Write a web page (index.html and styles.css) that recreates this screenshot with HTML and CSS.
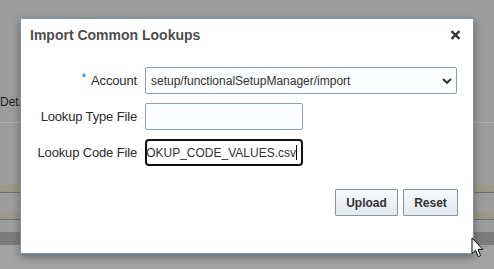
FILE: index.html
```html
<!DOCTYPE html>
<html>
<head>
<meta charset="utf-8">
<link rel="stylesheet" href="styles.css">
</head>
<body>
<div class="page">
  <div class="bg bg-top"></div>
  <div class="bg bg-text">Details</div>
  <div class="bg bg-gap1"></div>
  <div class="bg bg-line"></div>
  <div class="bg bg-gap2"></div>
  <div class="bg bg-band"></div>
  <div class="bg bg-gap3"></div>
  <div class="bg bg-band"></div>
  <div class="bg bg-gap4"></div>
  <div class="bg bg-dark"></div>
  <div class="bg bg-bottom"></div>
</div>

<div class="dialog">
  <div class="dlg-head">
    <span class="dlg-title">Import Common Lookups</span>
    <span class="dlg-close">
      <svg width="11" height="10" viewBox="0 0 11 10"><path d="M1.5 1.2 L9.5 8.8 M9.5 1.2 L1.5 8.8" stroke="#333" stroke-width="2.3" fill="none"/></svg>
    </span>
  </div>
  <div class="dlg-form">
    <label class="lbl"><span class="req">*</span><span>Account</span></label>
    <div class="select">
      <span class="select-text">setup/functionalSetupManager/import</span>
      <svg class="chev" width="10" height="6" viewBox="0 0 10 6"><path d="M1 1 L5 4.8 L9 1" stroke="#333" stroke-width="2" fill="none"/></svg>
    </div>
    <label class="lbl">Lookup Type File</label>
    <div class="field"><div class="input"></div></div>
    <label class="lbl">Lookup Code File</label>
    <div class="field"><div class="input focused"><span class="val">LOOKUP_CODE_VALUES.csv</span><span class="caret"></span></div></div>
  </div>
  <div class="dlg-actions">
    <button class="btn btn-upload">Upload</button>
    <button class="btn btn-reset">Reset</button>
  </div>
</div>

<svg class="cursor" width="14" height="22" viewBox="0 0 14 22">
  <path d="M1 1 L1 16.5 L4.6 13.2 L7.2 19.6 L9.6 18.6 L7 12.3 L11.8 12.3 Z" fill="#fff" stroke="#000" stroke-width="1" stroke-linejoin="miter"/>
</svg>
</body>
</html>
```

FILE: styles.css
```css
html, body {
  margin: 0;
  padding: 0;
}
body {
  width: 494px;
  height: 269px;
  overflow: hidden;
  position: relative;
  font-family: "Liberation Sans", Arial, sans-serif;
  background: #9c9c9c;
}
.page {
  display: flex;
  flex-direction: column;
  width: 494px;
  height: 269px;
}
.bg { flex: none; background: #9c9c9c; }
.bg-top { height: 94px; }
.bg-text {
  height: 16px;
  font-size: 12px;
  line-height: 16px;
  color: #1c1c1c;
  white-space: nowrap;
}
.bg-gap1 { height: 12px; }
.bg-line { height: 1px; background: #adadad; }
.bg-gap2 { height: 62px; }
.bg-band {
  height: 7px;
  background: #9a9886;
  border-bottom: 1px solid #6c7176;
}
.bg-gap3 { height: 19px; }
.bg-gap4 { height: 12px; }
.bg-dark { height: 13px; background: #7c7c7c; }
.bg-bottom { flex: 1; background: #a2a2a2; }

.dialog {
  position: absolute;
  left: 20px;
  top: 18px;
  width: 454px;
  height: 236px;
  box-sizing: border-box;
  background: #fff;
  border: 1px solid #7d94aa;
  box-shadow: 0 3px 8px rgba(0, 0, 0, 0.35);
  display: flex;
  flex-direction: column;
}
.dlg-head {
  height: 31px;
  display: flex;
  align-items: center;
  justify-content: space-between;
  padding: 0 12px 0 9px;
}
.dlg-title {
  font-size: 14px;
  font-weight: bold;
  line-height: 16px;
  color: #4e4e4e;
}
.dlg-close {
  display: flex;
  width: 11px;
  height: 10px;
}
.dlg-form {
  margin-top: 17px;
  display: grid;
  grid-template-columns: 116px 1fr;
  grid-auto-rows: 27px;
  column-gap: 8px;
  row-gap: 9px;
  padding-right: 16px;
}
.lbl {
  display: flex;
  align-items: center;
  justify-content: flex-end;
  font-size: 13px;
  color: #2b2b2b;
  letter-spacing: -0.15px;
  white-space: nowrap;
}
.req {
  color: #2a7bd0;
  font-size: 13px;
  position: relative;
  top: -3px;
  margin-right: 5px;
}
.select {
  box-sizing: border-box;
  height: 27px;
  border: 1px solid #8ea0b0;
  border-radius: 2px;
  background: #fbfcfd;
  display: flex;
  align-items: center;
  justify-content: space-between;
  padding: 0 4px 0 5px;
}
.select-text {
  font-size: 12px;
  color: #333;
}
.chev { display: block; }
.field { display: flex; align-items: stretch; }
.input {
  box-sizing: border-box;
  width: 158px;
  height: 27px;
  border: 1px solid #8ea0b0;
  border-radius: 2px;
  background: #fbfcfd;
}
.input.focused {
  border: 2px solid #111;
  border-radius: 4px;
  background: #fff;
  display: flex;
  align-items: center;
  justify-content: flex-end;
  overflow: hidden;
  white-space: nowrap;
  padding: 0 4px 0 0;
}
.val {
  font-size: 12px;
  color: #333;
  flex: none;
}
.caret {
  flex: none;
  width: 1px;
  height: 15px;
  background: #000;
}
.dlg-actions {
  margin-top: 23px;
  display: flex;
  justify-content: flex-end;
  gap: 5px;
  padding-right: 15px;
}
.btn {
  box-sizing: border-box;
  height: 27px;
  margin: 0;
  padding: 0;
  border: 1px solid #8797a6;
  border-radius: 1px;
  background: linear-gradient(#f6f8fa, #e5eaef);
  font-family: "Liberation Sans", Arial, sans-serif;
  font-size: 12px;
  font-weight: bold;
  color: #333;
}
.btn-upload { width: 63px; }
.btn-reset { width: 55px; }
.cursor {
  position: absolute;
  left: 471px;
  top: 237px;
}
```
